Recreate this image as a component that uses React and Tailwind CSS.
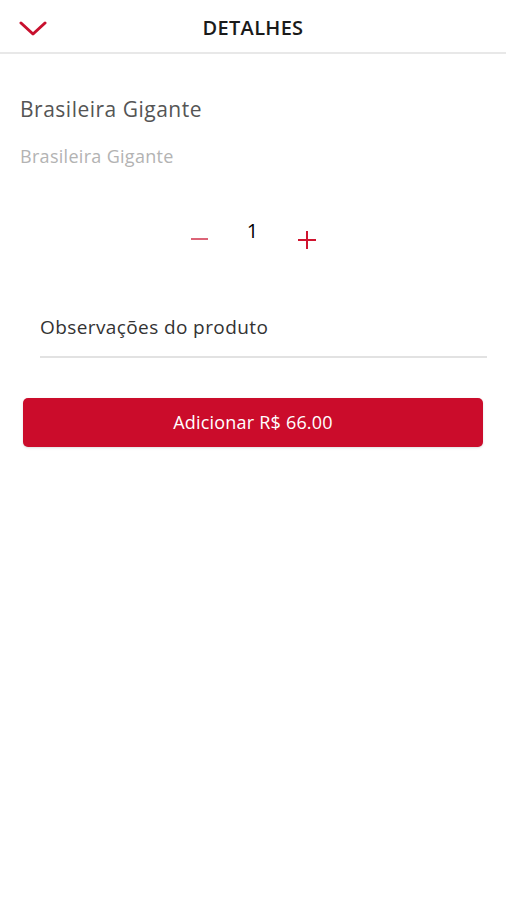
import React, { useState } from 'react';

const font = { fontFamily: '"Open Sans", "Noto Sans", sans-serif' };

function ChevronDown() {
  return (
    <svg width="28" height="16" viewBox="0 0 28 16" fill="none">
      <path d="M2 2l12 11L26 2" stroke="#c8102e" strokeWidth="3" strokeLinecap="round" strokeLinejoin="round" />
    </svg>
  );
}

export default function App() {
  const [qty, setQty] = useState(1);

  return (
    <div className="w-[506px] min-h-[900px] bg-white" style={font}>
      {/* header */}
      <div className="relative h-[54px] flex items-center justify-center border-b-2 border-[#e8e8e8]">
        <button className="absolute left-[19px] top-[21px]">
          <ChevronDown />
        </button>
        <h1 className="text-[20px] font-semibold tracking-[0.3px] text-[#1a1a1a] mt-[3px] leading-[24px]">DETALHES</h1>
      </div>

      <div className="px-5 pt-[41px]">
        <p className="text-[21px] tracking-[0.5px] text-[#555] leading-[28px]">Brasileira Gigante</p>
        <p className="text-[18px] tracking-[0.3px] text-[#b3b3b3] mt-[21px] leading-[24px]">Brasileira Gigante</p>
      </div>

      {/* quantity */}
      <div className="flex justify-center items-start mt-[51px] h-[30px]">
        <button onClick={() => setQty(Math.max(1, qty - 1))} className="w-[17px] h-[2px] mt-[19px] bg-[#dc6477]"></button>
        <span className="w-[90px] text-center text-[20px] text-black leading-[24px]">{qty}</span>
        <button onClick={() => setQty(qty + 1)} className="relative w-[18px] h-[18px] mt-[12px]">
          <span className="absolute left-0 top-[8px] w-[18px] h-[2px] bg-[#d0142f]"></span>
          <span className="absolute left-[8px] top-0 w-[2px] h-[18px] bg-[#d0142f]"></span>
        </button>
      </div>

      {/* observations */}
      <div className="pl-10 pr-[19px] mt-[64px]">
        <input
          placeholder="Observações do produto"
          className="w-full h-[45px] pb-[16px] text-[19px] tracking-[0.4px] text-[#333] placeholder:text-[#333] border-b-2 border-[#e2e2e2] outline-none bg-transparent"
        />
      </div>

      {/* add button */}
      <div className="px-[23px] mt-[40px]">
        <button className="w-full h-[49px] rounded-[5px] bg-[#cb0c2b] text-white text-[18px] tracking-[0.2px] shadow-sm">
          Adicionar R$ 66.00
        </button>
      </div>
    </div>
  );
}
